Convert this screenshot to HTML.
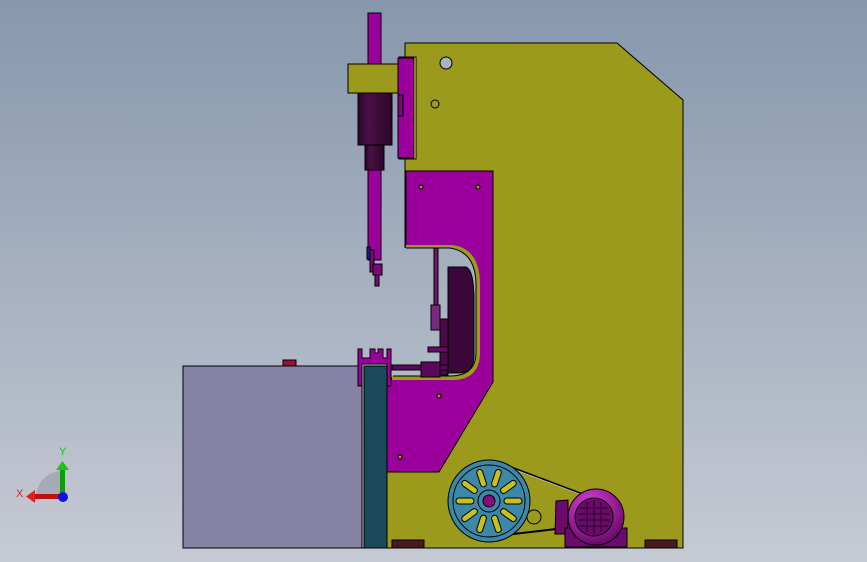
<!DOCTYPE html>
<html><head><meta charset="utf-8"><style>
html,body{margin:0;padding:0;width:867px;height:562px;overflow:hidden}
svg{display:block}
</style></head><body>
<svg width="867" height="562" viewBox="0 0 867 562" xmlns="http://www.w3.org/2000/svg" font-family="Liberation Sans, sans-serif">
<defs>
<linearGradient id="bg" x1="0" y1="0" x2="0" y2="562" gradientUnits="userSpaceOnUse">
<stop offset="0" stop-color="#8797ad"/><stop offset="1" stop-color="#c6cad4"/>
</linearGradient>
<radialGradient id="mot" cx="0.4" cy="0.3" r="0.7">
<stop offset="0" stop-color="#e040e0"/><stop offset="1" stop-color="#6a0a6a"/>
</radialGradient>
<linearGradient id="cyl" x1="0" x2="1"><stop offset="0" stop-color="#2a0628"/><stop offset=".3" stop-color="#4a1045"/><stop offset="1" stop-color="#2a0628"/></linearGradient>
</defs>
<rect width="867" height="562" fill="url(#bg)"/>
<g stroke="#000" stroke-width="1">
<rect x="183" y="366" width="179" height="182" fill="#8583a3"/>
<rect x="283" y="360" width="13" height="6" fill="#90143a"/>
<polygon points="405,43 617,43 683,100 683,548 386,548 386,380 405,380" fill="#9c9a1c"/>
<polygon points="406,171 493,171 493,382 439,472 386,472 386,378 406,378" fill="#9c009c"/>
<path d="M406,245 L452,245 Q480,248 480,285 L480,352 Q480,380 452,380 L392,380 L392,378" fill="#9c9a1c" stroke="none"/>
<path d="M392,248 L450,248 Q476,252 476,285 L476,352 Q476,376 450,376 L392,376 Z" fill="url(#bg)" stroke="none"/>
<path d="M406,248 L450,248 Q476,252 476,285 L476,352 Q476,376 450,376 L393,376" fill="none"/>
<path d="M448,267 L466,267 Q474,270 474,300 L474,355 Q474,372 460,373 L448,373 Z" fill="#3a0838"/>
<rect x="434" y="248" width="4" height="60" fill="#6a1a6a"/>
<rect x="431" y="305" width="9" height="25" fill="#7a2a7a"/>
<rect x="440" y="319" width="8" height="56" fill="#4a0a48"/>
<rect x="428" y="347" width="20" height="5" fill="#6a0a6a"/>
<rect x="392" y="365" width="56" height="5" fill="#5a0a5a"/>
<rect x="421" y="362" width="19" height="15" fill="#5a0a5a"/>
<circle cx="446" cy="63" r="6" fill="#a8b4c4"/>
<circle cx="435" cy="104" r="4" fill="none"/>
<circle cx="421" cy="187" r="2" fill="#9c9a1c"/>
<circle cx="478" cy="187" r="2" fill="#9c9a1c"/>
<circle cx="439" cy="396" r="2" fill="#9c9a1c"/>
<circle cx="400" cy="457" r="2" fill="#9c9a1c"/>
<rect x="368" y="13" width="13" height="52" fill="#9c009c"/>
<rect x="358" y="93" width="34" height="52" fill="url(#cyl)"/>
<rect x="365" y="145" width="19" height="25" fill="url(#cyl)"/>
<rect x="368" y="170" width="13" height="90" fill="#9c009c"/>
<rect x="370" y="250" width="4" height="22" fill="#7a0a7a"/>
<rect x="373" y="264" width="9" height="11" fill="#7a0a7a"/>
<rect x="375" y="275" width="4" height="11" fill="#7a0a7a"/>
<rect x="367" y="247" width="3" height="12" fill="#20208a"/>
<rect x="348" y="64" width="53" height="29" fill="#9c9a1c"/>
<rect x="399" y="57" width="17" height="102" fill="#ffff60"/>
<rect x="398" y="58" width="16" height="100" fill="#9c009c"/>
<rect x="398" y="95" width="5" height="21" fill="#7a0a7a"/>
<rect x="364" y="366" width="23" height="182" fill="#1a4a5a"/>
<path d="M358,349 h4 v9 h8 v-9 h5 v4 h3 v-4 h5 v9 h4 v-9 h4 v37 h-4 v-22 h-25 v22 h-4 Z" fill="#9c009c"/>
<rect x="392" y="540" width="32" height="8" fill="#4a1a1a"/>
<rect x="645" y="540" width="32" height="8" fill="#4a1a1a"/>
<line x1="505" y1="465" x2="585" y2="495" stroke-width="2"/>
<line x1="505" y1="535" x2="565" y2="528" stroke-width="2"/>
<line x1="505" y1="466" x2="585" y2="496" stroke="#ddd" stroke-width="0.6"/>
<circle cx="534" cy="517" r="7" fill="none"/>
<circle cx="489" cy="501" r="41" fill="#3c88a8"/>
<circle cx="489" cy="501" r="36" fill="none"/>
<g fill="#c8c020" stroke="#000">
<g id="sp"><rect x="504" y="498" width="18" height="6" rx="3"/></g>
<use href="#sp" transform="rotate(36 489 501)"/>
<use href="#sp" transform="rotate(72 489 501)"/>
<use href="#sp" transform="rotate(108 489 501)"/>
<use href="#sp" transform="rotate(144 489 501)"/>
<use href="#sp" transform="rotate(180 489 501)"/>
<use href="#sp" transform="rotate(216 489 501)"/>
<use href="#sp" transform="rotate(252 489 501)"/>
<use href="#sp" transform="rotate(288 489 501)"/>
<use href="#sp" transform="rotate(324 489 501)"/>
</g>
<circle cx="489" cy="501" r="11" fill="#3c88a8"/>
<circle cx="489" cy="501" r="6" fill="#8a0a7a"/>
<polygon points="556,501 568,500 568,534 555,534" fill="#6a0a6a"/>
<rect x="565" y="528" width="62" height="19" fill="#6a0a6a"/>
<circle cx="596" cy="517" r="28" fill="url(#mot)"/>
<circle cx="594" cy="517" r="19" fill="#6a0a6a"/>
<g stroke="#2a002a" fill="none"><path d="M580,508h28M578,514h32M578,520h32M580,526h28M594,500v34M587,502v30M601,502v30"/></g>
<line x1="183" y1="548" x2="683" y2="548"/>
</g>
<path d="M62,497 L36,497 A26,26 0 0 1 62,471 Z" fill="#a0a4ae" opacity="0.8"/>
<rect x="60" y="470" width="5" height="27" fill="#109a10"/>
<polygon points="56,470 62.5,461 69,470" fill="#20c020"/>
<rect x="35" y="494" width="27" height="5" fill="#c01010"/>
<polygon points="35,490 26,496.5 35,503" fill="#e02020"/>
<circle cx="63" cy="497" r="5" fill="#1010e0"/>
<text x="59" y="455" font-size="11" fill="#20c020">Y</text>
<text x="16" y="497" font-size="11" fill="#e02020">X</text>
</svg>
</body></html>
